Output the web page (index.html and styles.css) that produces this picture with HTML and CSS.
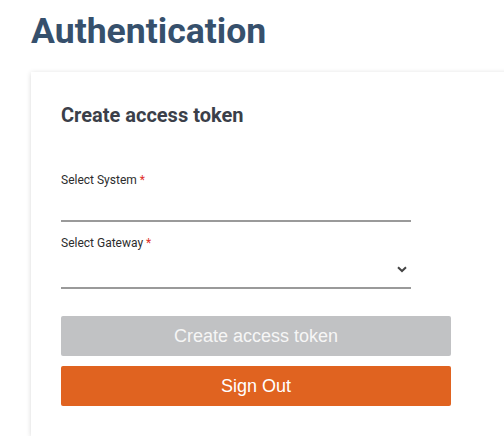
FILE: index.html
```html
<!DOCTYPE html>
<html>
<head>
<meta charset="utf-8">
<link rel="stylesheet" href="styles.css">
</head>
<body>
<div class="page">
  <h1 class="title">Authentication</h1>
  <div class="card">
    <h2 class="card-title">Create access token</h2>
    <div class="field">
      <label class="label">Select System <span class="req">*</span></label>
      <div class="input"></div>
    </div>
    <div class="field">
      <label class="label">Select Gateway <span class="req">*</span></label>
      <div class="input select">
        <svg class="chev" width="10" height="7" viewBox="0 0 10 7"><path d="M1 1.2 L5 5 L9 1.2" fill="none" stroke="#444" stroke-width="2"/></svg>
      </div>
    </div>
    <div class="actions">
      <button class="btn btn-disabled">Create access token</button>
      <button class="btn btn-primary">Sign Out</button>
    </div>
  </div>
</div>
</body>
</html>
```
FILE: styles.css
```css
html, body { margin: 0; padding: 0; background: #fff; overflow: hidden; }
.page { padding: 0 0 0 31px; font-family: Roboto, "Liberation Sans", sans-serif; }
.title { margin: 0; padding-top: 8px; font-size: 35.6px; font-weight: 700; line-height: 46px; color: #36506c; }
.card {
  margin-top: 18px;
  width: 520px;
  height: 364px;
  box-sizing: border-box;
  padding: 31px 30px 0 30px;
  background: #fff;
  box-shadow: 0 1px 5px rgba(0,0,0,0.16);
}
.card-title { margin: 0; font-size: 20px; font-weight: 700; line-height: 24px; color: #3b3f49; }
.field { width: 350px; margin-top: 0; }
.field:first-of-type { margin-top: 46px; }
.label { display: block; font-size: 12px; line-height: 14px; color: #2d2d2d; }
.req { color: #e0302a; }
.input { height: 33px; border-bottom: 2px solid #9a9a9a; position: relative; }
.input.select { height: 37px; }
.field + .field { margin-top: 14px; }
.select .chev { position: absolute; right: 4px; top: 16px; }
.actions { display: flex; flex-direction: column; gap: 10px; width: 390px; margin-top: 27px; }
.btn {
  height: 40px; border: 0; border-radius: 2px;
  font-family: "Liberation Sans", Arial, sans-serif; font-size: 18px; color: #fff;
}
.btn-disabled { background: #c1c2c4; color: #f6f6f6; }
.btn-primary { background: #e06320; }
```
